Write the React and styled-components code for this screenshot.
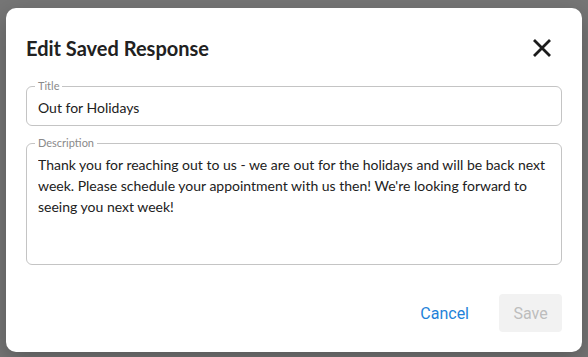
import React from 'react';
import styled, { createGlobalStyle } from 'styled-components';

const GlobalStyle = createGlobalStyle`
  html, body {
    margin: 0;
    padding: 0;
    background: #767676;
  }
  body {
    font-family: Lato, "Open Sans", sans-serif;
  }
`;

const CloseIcon = () => (
  <svg width="20" height="20" viewBox="0 0 20 20" aria-hidden="true">
    <path
      d="M2 2 L18 18 M18 2 L2 18"
      stroke="currentColor"
      strokeWidth="2.8"
      strokeLinecap="butt"
      fill="none"
    />
  </svg>
);

const App = () => {
  return (
    <>
      <GlobalStyle />
      <StBackdrop>
        <StDialog>
          <StHeader>
            <StHeading>Edit Saved Response</StHeading>
            <StClose type="button" aria-label="close">
              <CloseIcon />
            </StClose>
          </StHeader>

          <StFields>
            <StFieldset>
              <StLegend>Title</StLegend>
              <StInput defaultValue="Out for Holidays" />
            </StFieldset>
            <StFieldset>
              <StLegend>Description</StLegend>
              <StTextarea
                defaultValue="Thank you for reaching out to us - we are out for the holidays and will be back next week. Please schedule your appointment with us then! We're looking forward to seeing you next week!"
              />
            </StFieldset>
          </StFields>

          <StFooter>
            <StTextButton type="button">Cancel</StTextButton>
            <StSaveButton type="button" disabled>
              Save
            </StSaveButton>
          </StFooter>
        </StDialog>
      </StBackdrop>
    </>
  );
};

const StBackdrop = styled.div`
  min-height: 357px;
  display: flex;
  justify-content: center;
  align-items: flex-start;
  padding-top: 8px;
  box-sizing: border-box;
`;

const StDialog = styled.div`
  width: 576px;
  height: 344px;
  box-sizing: border-box;
  background: #fff;
  border-radius: 10px;
  padding: 18px 20px 20px;
  display: flex;
  flex-direction: column;
  box-shadow: 0 8px 24px rgba(0, 0, 0, 0.25);
`;

const StHeader = styled.div`
  height: 44px;
  display: flex;
  align-items: center;
  justify-content: space-between;
`;

const StHeading = styled.h2`
  margin: 0;
  font-size: 20px;
  font-weight: 700;
  color: #212121;
`;

const StClose = styled.button`
  border: none;
  background: none;
  padding: 0;
  margin-right: 10px;
  width: 20px;
  height: 20px;
  color: #1c1c1c;
  display: flex;
  cursor: pointer;
`;

const StFields = styled.div`
  margin-top: 10px;
  display: flex;
  flex-direction: column;
  gap: 11px;
`;

const StFieldset = styled.fieldset`
  margin: 0;
  padding: 0 11px;
  border: 1px solid #c4c4c4;
  border-radius: 6px;
  display: flex;
  flex-direction: column;
`;

const StLegend = styled.legend`
  font-size: 11px;
  line-height: 12px;
  color: #8a8a8a;
  padding: 0 3px;
  margin-left: -3px;
`;

const StInput = styled.input`
  border: none;
  outline: none;
  padding: 0 0 2px;
  height: 33px;
  box-sizing: border-box;
  font-family: Lato, sans-serif;
  font-size: 14px;
  color: #212121;
  background: transparent;
`;

const StTextarea = styled.textarea`
  border: none;
  outline: none;
  resize: none;
  padding: 5px 0;
  height: 115px;
  box-sizing: border-box;
  font-family: Lato, sans-serif;
  font-size: 14px;
  line-height: 21px;
  color: #212121;
  background: transparent;
`;

const StFooter = styled.div`
  margin-top: auto;
  display: flex;
  justify-content: flex-end;
  align-items: center;
  gap: 22px;
`;

const StTextButton = styled.button`
  border: none;
  background: none;
  font-family: Roboto, sans-serif;
  font-size: 16px;
  color: #1e82d9;
  padding: 6px 8px;
  cursor: pointer;
`;

const StSaveButton = styled.button`
  border: none;
  border-radius: 4px;
  background: #f2f2f2;
  font-family: Roboto, sans-serif;
  font-size: 16px;
  color: #bdbdbd;
  height: 38px;
  width: 63px;
  padding: 0;
`;

export default App;
